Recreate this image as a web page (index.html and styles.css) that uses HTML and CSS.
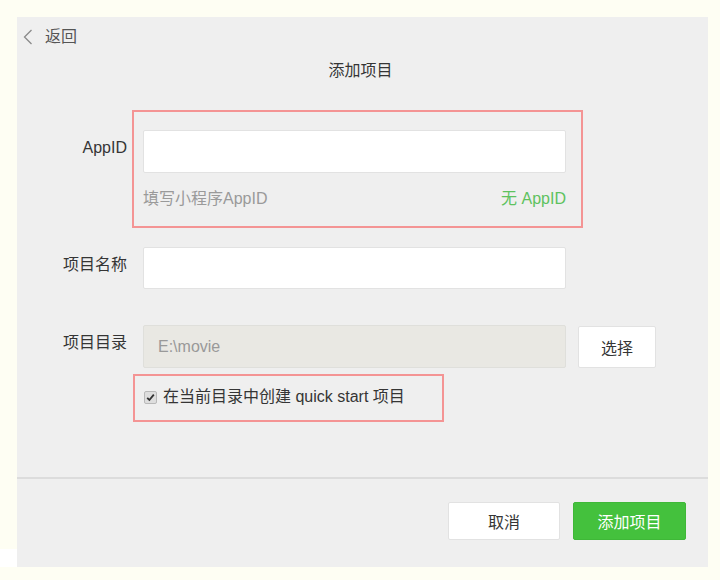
FILE: index.html
```html
<!DOCTYPE html>
<html lang="zh">
<head>
<meta charset="utf-8">
<title>添加项目</title>
<link rel="stylesheet" href="styles.css">
</head>
<body>
<div class="frame">
  <div class="side"><div class="side-fill"></div><div class="side-white"></div></div>
  <div class="panel">
    <div class="content">
      <div class="back">
        <svg class="chev" width="10" height="16" viewBox="0 0 10 16"><path d="M8.5 1 L1.5 8 L8.5 15" fill="none" stroke="#8a8a8a" stroke-width="1.3"/></svg>
        <span class="back-text">返回</span>
      </div>
      <div class="title">添加项目</div>

      <div class="row row-appid">
        <div class="label">AppID</div>
        <div class="annot annot-appid">
          <div class="input"></div>
          <div class="hint-row">
            <span class="hint">填写小程序AppID</span>
            <span class="noid">无 AppID</span>
          </div>
        </div>
      </div>

      <div class="row row-name">
        <div class="label">项目名称</div>
        <div class="input input-name"></div>
      </div>

      <div class="row row-dir">
        <div class="label">项目目录</div>
        <div class="input input-dir">E:\movie</div>
        <div class="btn btn-pick">选择</div>
      </div>

      <div class="annot annot-check">
        <span class="checkbox">
          <svg width="9" height="9" viewBox="0 0 9 9"><path d="M1.2 4.8 L3.4 7 L7.8 1.6" fill="none" stroke="#333" stroke-width="1.8"/></svg>
        </span>
        <span class="check-text">在当前目录中创建 quick start 项目</span>
      </div>
    </div>
    <div class="footer">
      <div class="btn btn-cancel">取消</div>
      <div class="btn btn-add">添加项目</div>
    </div>
  </div>
</div>
</body>
</html>
```
FILE: styles.css
```css
* { box-sizing: border-box; }
html, body { margin: 0; padding: 0; }
body {
  background: #fefef3;
  font-family: "Liberation Sans", "Noto Sans CJK SC", sans-serif;
  font-size: 16px;
  color: #353535;
  width: 720px;
  height: 580px;
  overflow: hidden;
}
.frame {
  display: flex;
  margin-top: 17px;
  height: 550px;
}
.side {
  width: 17px;
  display: flex;
  flex-direction: column;
}
.side-fill { flex: 1; }
.side-white { height: 18px; background: #ffffff; }
.panel {
  width: 691px;
  height: 550px;
  background: #efefef;
  display: flex;
  flex-direction: column;
}
.content { flex: 1; }
.back {
  height: 40px;
  display: flex;
  align-items: center;
  padding-left: 6px;
}
.chev { display: block; }
.back-text {
  margin-left: 12px;
  color: #555;
  line-height: 20px;
}
.title {
  text-align: center;
  line-height: 26px;
  height: 26px;
  padding-top: 1px;
  padding-right: 4px;
}
.row { display: flex; align-items: flex-start; }
.label {
  width: 110px;
  text-align: right;
  line-height: 36px;
  color: #353535;
  flex-shrink: 0;
}
.row-appid { margin-top: 27px; }
.row-appid .label { margin-top: 20px; }
.annot {
  border: 2px solid #f49494;
}
.annot-appid {
  margin-left: 5px;
  width: 451px;
  padding: 18px 15px 17px 9px;
}
.input {
  background: #fff;
  border: 1px solid #e2e2e2;
  border-radius: 2px;
  width: 423px;
  height: 43px;
}
.hint-row {
  display: flex;
  justify-content: space-between;
  margin-top: 16px;
  line-height: 20px;
}
.hint { color: #9a9a9a; }
.noid { color: #5ec25e; }
.row-name { margin-top: 19px; }
.row-name .label, .row-dir .label { margin-right: 16px; }
.input-name { height: 42px; }
.row-dir { margin-top: 36px; align-items: flex-start; }
.input-dir {
  background: #e9e8e3;
  border-color: #dfdfdb;
  color: #999;
  padding-left: 14px;
  line-height: 41px;
}
.btn {
  display: flex;
  align-items: center;
  justify-content: center;
  border-radius: 2px;
}
.btn-pick {
  margin-left: 12px;
  margin-top: 1px;
  width: 78px;
  height: 42px;
  background: #fff;
  border: 1px solid #e2e2e2;
  color: #353535;
}
.annot-check {
  margin-top: 6px;
  margin-left: 116px;
  width: 311px;
  height: 48px;
  display: flex;
  align-items: center;
  padding-left: 9px;
  padding-bottom: 2px;
}
.checkbox {
  width: 13px;
  height: 13px;
  border: 1px solid #b9b9b9;
  border-radius: 2px;
  background: #dedede;
  display: flex;
  align-items: center;
  justify-content: center;
}
.checkbox svg { display: block; }
.check-text { margin-left: 6px; line-height: 20px; }
.footer {
  border-top: 2px solid #dcdcdc;
  height: 90px;
  display: flex;
  justify-content: flex-end;
  align-items: flex-start;
  padding-top: 23px;
  padding-right: 22px;
}
.btn-cancel {
  width: 112px;
  height: 38px;
  background: #fff;
  border: 1px solid #e2e2e2;
  color: #353535;
}
.btn-add {
  margin-left: 13px;
  width: 113px;
  height: 38px;
  background: #44c13d;
  color: #fff;
  border: 1px solid #3fb838;
}
```
